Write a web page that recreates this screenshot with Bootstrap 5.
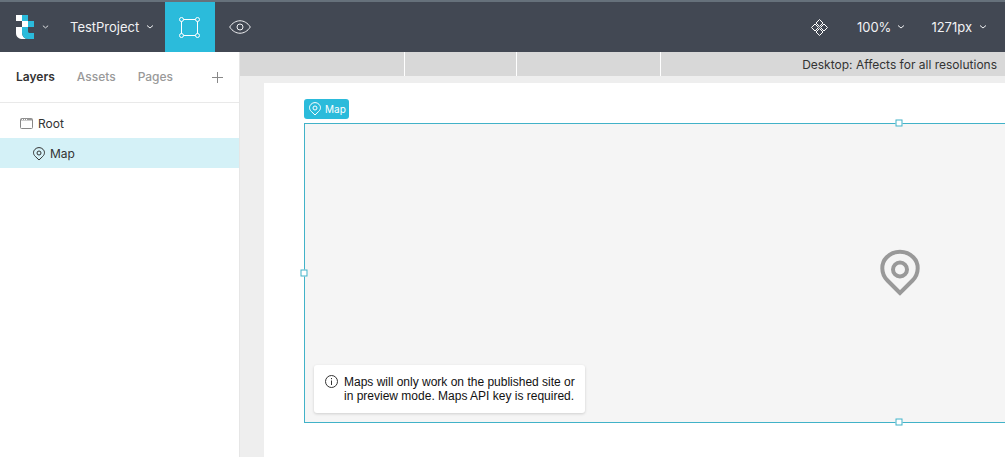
<!DOCTYPE html>
<html lang="en">
<head>
<meta charset="utf-8">
<meta name="viewport" content="width=device-width, initial-scale=1">
<title>TestProject</title>
<link href="https://cdn.jsdelivr.net/npm/bootstrap@5.3.0/dist/css/bootstrap.min.css" rel="stylesheet">
<style>
:root { --accent: #2bbbdb; --bar: #424853; --frame: #41b2c8; }
body { font-family: Inter, "Liberation Sans", sans-serif; font-size: 13px; line-height: 20px; color: #333; }
svg { display: block; flex: none; }
button { font: inherit; color: inherit; background: none; border: 0; padding: 0; }
.topbar { height: 52px; background: var(--bar); border-top: 2px solid #66717b; color: #f1f2f4; }
.brand { width: 66px; }
.project { width: 99px; padding-left: 4px; gap: 7px; }
.tool { width: 50px; padding-right: 1px; }
.tool.active { background: var(--accent); }
.view-options { gap: 28px; padding-right: 18px; }
.view-options button { gap: 6px; }
.view-options button:last-child { gap: 7px; margin-left: -2px; }
.sidebar { width: 240px; border-right: 1px solid #e6e6e6; }
.tabs { height: 51px; border-bottom: 1px solid #e9e9e9; color: #999; gap: 22px; font-weight: 500; font-size: 12px; }
.tabs .active { color: #333; font-weight: 600; }
.layers { padding-top: 5px; }
.layer { height: 30px; gap: 5px; font-size: 12px; width: 100%; padding: 1px 0 0 20px; }
.layer.selected { background: #d4f1f7; padding-left: 33px; }
.workspace { background: #eee; min-width: 0; }
.ruler { height: 24px; background: #d8d8d8; font-size: 12px; }
.ruler .stop { border-right: 1px solid #fff; }
.ruler .caption { padding: 3px 8px 0 0; }
.artboard { width: 1271px; margin: 7px 0 0 24px; padding: 16px 40px 0; background: #fff; }
.tag { height: 20px; width: 45px; background: var(--accent); color: #fff; border-radius: 3px; font-size: 10px; gap: 4px; padding-left: 5px; }
.map { height: 300px; margin-top: 4px; background: #f5f5f5; border: 1px solid var(--frame); }
.handles { inset: -1px 0 0 -1px; }
.handle { width: 7px; height: 7px; background: #fff; border: 1px solid var(--frame); }
.notice { left: 9px; bottom: 9px; width: 271px; padding: 10px 10px 10px 11px; gap: 6px; background: #fff; border-radius: 3px; box-shadow: 0 1px 3px rgba(0,0,0,.16); font: 12px/14px "Liberation Sans", sans-serif; color: #111; }
</style>
</head>
<body class="vh-100 d-flex flex-column overflow-hidden">
<svg class="d-none" aria-hidden="true">
  <symbol id="chevron" viewBox="0 0 8 6"><path d="M1 1.500 4 4l3-2.500" fill="none" stroke="currentColor"/></symbol>
  <symbol id="pin" viewBox="0 0 12 14"><path d="M6 13 2.200 9.300C0 7.200 0 4.300 2 2.300a5.500 5.500 0 0 1 8 0c2 2 2 4.900-.2 7Z" fill="none" stroke="currentColor"/><circle cx="6" cy="6" r="2" fill="none" stroke="currentColor"/></symbol>
</svg>
<header class="topbar d-flex flex-shrink-0 align-items-stretch">
  <button class="brand d-flex align-items-center ps-3" aria-label="Main menu">
    <svg width="18" height="24" viewBox="0 0 18 24"><path fill="#fff" d="M0 0h6v6H0zM6 6h6v6H6zM0 12h6v5c0 4 2 7 6 7H7c-4 0-7-2-7-6z"/><path fill="#2bbbdb" d="M6 0h6v6H6zM12 6h6v6h-6zM6 12h6v4c0 1.500.5 2 2 2h4v6h-6c-4 0-6-3-6-7z"/></svg>
    <svg class="ms-2" width="7" height="6"><use href="#chevron"/></svg>
  </button>
  <button class="project d-flex align-items-center"><span>TestProject</span><svg width="8" height="6"><use href="#chevron"/></svg></button>
  <button class="tool active d-flex align-items-center justify-content-center" aria-label="Edit">
    <svg width="21" height="21" fill="#2bbbdb" stroke="#fff"><path d="M2.500 2.500h16v16h-16z"/><circle cx="2.500" cy="2.500" r="2"/><circle cx="18.500" cy="2.500" r="2"/><circle cx="2.500" cy="18.500" r="2"/><circle cx="18.500" cy="18.500" r="2"/></svg>
  </button>
  <button class="tool d-flex align-items-center justify-content-center" aria-label="Preview">
    <svg width="22" height="14" fill="none" stroke="currentColor"><path d="M.7 7C6-1.300 16-1.300 21.300 7 16 15.300 6 15.300.7 7Z"/><circle cx="11" cy="7" r="3"/></svg>
  </button>
  <div class="view-options d-flex ms-auto align-items-center">
    <button aria-label="Components"><svg width="19" height="19" fill="none" stroke="#fff"><path d="M9.500 1.500 13 5 9.500 8.500 6 5zM9.500 10.500 13 14l-3.500 3.500L6 14zM5 6l3.500 3.500L5 13 1.500 9.500zM14 6l3.500 3.500L14 13l-3.500-3.500z"/></svg></button>
    <button class="d-flex align-items-center"><span>100%</span><svg width="8" height="6"><use href="#chevron"/></svg></button>
    <button class="d-flex align-items-center"><span>1271px</span><svg width="8" height="6"><use href="#chevron"/></svg></button>
  </div>
</header>
<div class="d-flex flex-grow-1 overflow-hidden">
  <aside class="sidebar flex-shrink-0 bg-white">
    <nav class="tabs d-flex align-items-center ps-3 pe-3">
      <button class="active">Layers</button><button>Assets</button><button>Pages</button>
      <button class="ms-auto" aria-label="Add layer"><svg width="11" height="11" stroke="#888"><path d="M0 5.500h11M5.500 0v11"/></svg></button>
    </nav>
    <div class="layers">
      <button class="layer d-flex align-items-center"><svg width="13" height="11"><rect x=".5" y=".5" width="12" height="10" rx="1" fill="none" stroke="#888"/><path d="M1 1.500h11" stroke="#999" stroke-width="2"/><path d="M2 1.500h1M4 1.500h1M6 1.500h1" stroke="#fff"/></svg>Root</button>
      <button class="layer selected d-flex align-items-center"><svg width="12" height="14"><use href="#pin"/></svg>Map</button>
    </div>
  </aside>
  <main class="workspace flex-grow-1 d-flex flex-column overflow-hidden">
    <div class="ruler d-flex flex-shrink-0">
      <div class="stop" style="width:165px"></div><div class="stop" style="width:112px"></div><div class="stop" style="width:144px"></div>
      <span class="caption ms-auto">Desktop: Affects for all resolutions</span>
    </div>
    <section class="artboard flex-grow-1 flex-shrink-0">
      <div class="tag d-flex align-items-center"><svg width="12" height="14"><use href="#pin"/></svg>Map</div>
      <div class="map position-relative d-flex align-items-center justify-content-center">
        <svg width="40" height="48" fill="none" stroke="#999" stroke-width="4"><path d="M20 44 7.500 31.500C.5 24.500 1 14 6.500 8.500a19 19 0 0 1 27 0C39 14 39.500 24.500 32.500 31.500Z"/><circle cx="20" cy="20.500" r="7"/></svg>
        <div class="handles position-absolute">
          <span class="handle position-absolute top-0 start-50 translate-middle"></span>
          <span class="handle position-absolute top-50 start-0 translate-middle"></span>
          <span class="handle position-absolute top-100 start-50 translate-middle"></span>
        </div>
        <div class="notice position-absolute d-flex"><svg width="13" height="13" fill="none" stroke="#333"><circle cx="6.500" cy="6.500" r="6"/><path d="M6.500 5.500V10M6.500 3v1.200"/></svg><span>Maps will only work on the published site or in preview mode. Maps API key is required.</span></div>
      </div>
    </section>
  </main>
</div>
<script src="https://cdn.jsdelivr.net/npm/bootstrap@5.3.0/dist/js/bootstrap.bundle.min.js"></script>
</body>
</html>
